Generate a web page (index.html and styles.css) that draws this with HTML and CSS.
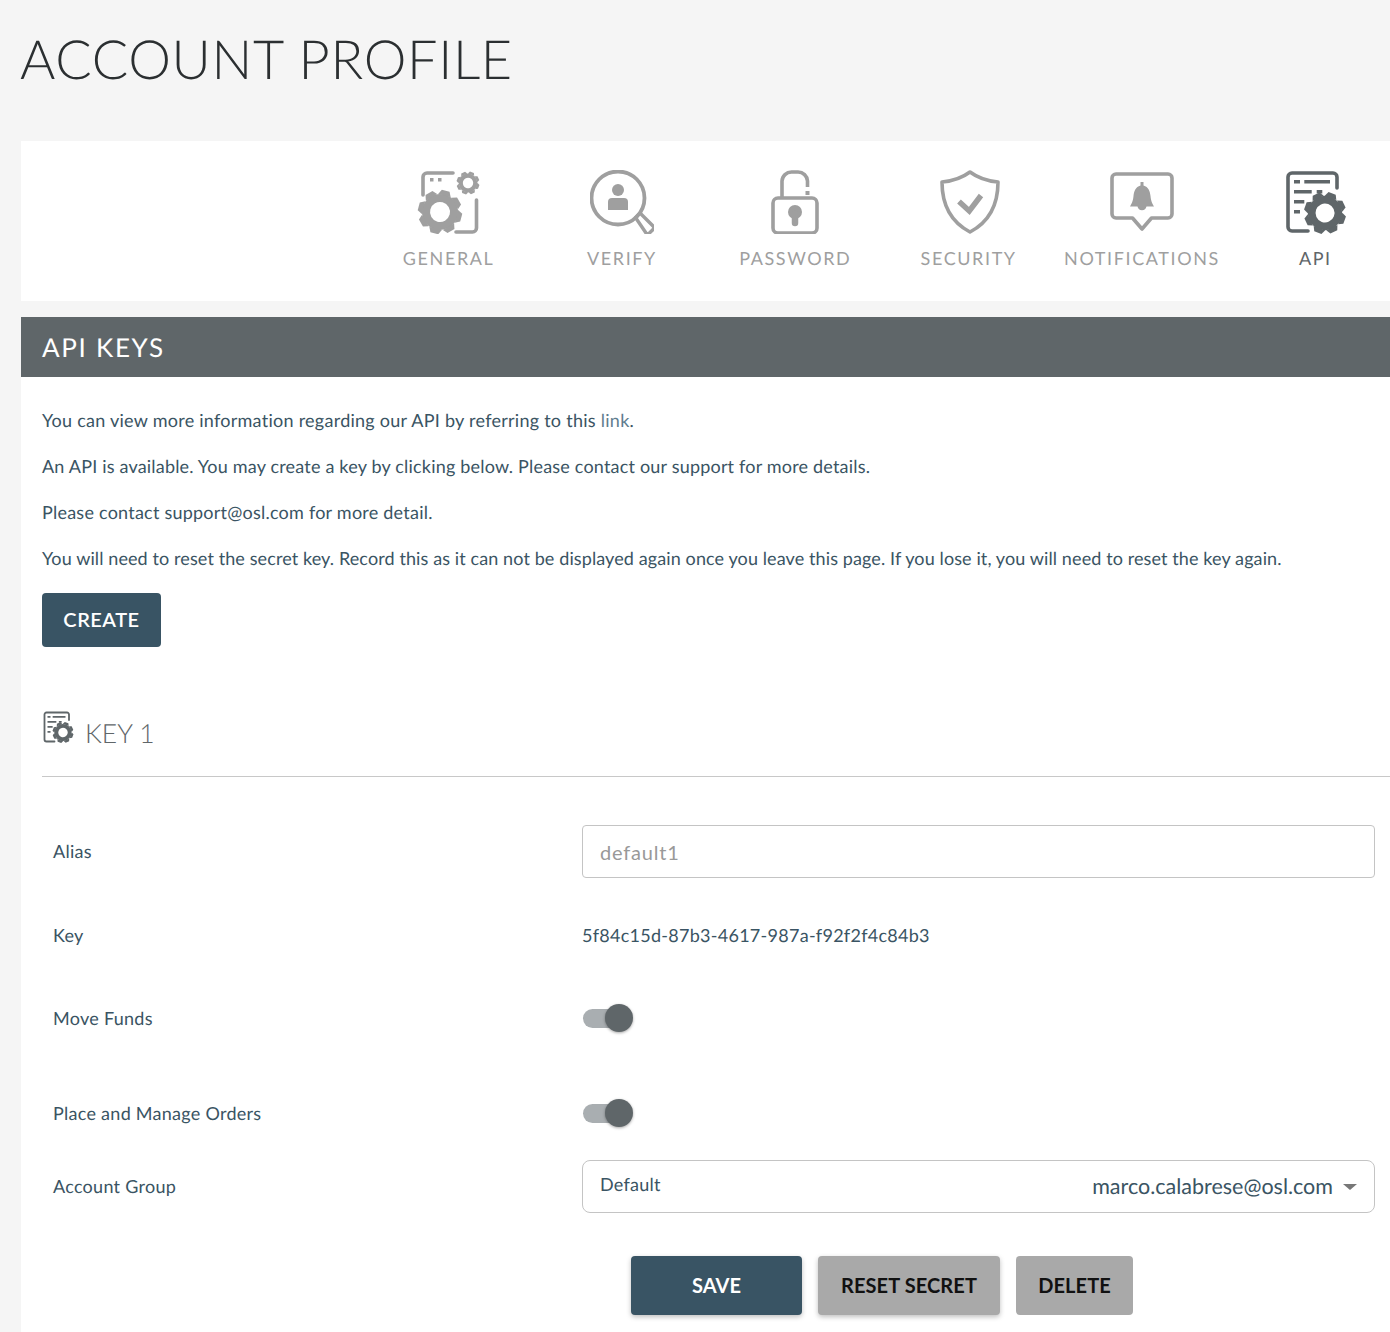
FILE: index.html
```html
<!DOCTYPE html>
<html lang="en">
<head>
<meta charset="utf-8">
<title>Account Profile</title>
<link rel="stylesheet" href="styles.css">
</head>
<body>
<svg class="defs" width="0" height="0" aria-hidden="true">
  <defs>
    <g id="gear">
      <circle r="14" fill="none" stroke="currentColor" stroke-width="8"/>
      <path id="tooth" d="M-6.500 -17 L-4 -22 H4 L6.500 -17Z" fill="currentColor" stroke="none"/>
      <use href="#tooth" transform="rotate(45)"/>
      <use href="#tooth" transform="rotate(90)"/>
      <use href="#tooth" transform="rotate(135)"/>
      <use href="#tooth" transform="rotate(180)"/>
      <use href="#tooth" transform="rotate(225)"/>
      <use href="#tooth" transform="rotate(270)"/>
      <use href="#tooth" transform="rotate(315)"/>
    </g>
    <g id="api">
      <path d="M54 18V7a4 4 0 0 0-4-4H9a4 4 0 0 0-4 4V57a4 4 0 0 0 4 4H25" fill="none" stroke="currentColor" stroke-width="3.6" stroke-linecap="round"/>
      <path d="M11 11.700H17M21.300 11.700H47M11 21.700H28.700M33.700 21.700H39.300M11 31.700H21.300M11 41.700H17" fill="none" stroke="currentColor" stroke-width="3.6"/>
      <use href="#gear" transform="translate(42 43) rotate(20) scale(.95)"/>
    </g>
  </defs>
</svg>

<h1 class="title">ACCOUNT PROFILE</h1>

<nav class="tabs">
  <a class="tab">
    <svg class="tab-icon" viewBox="-1 0 64 64">
      <path d="M5 25V7a4 4 0 0 1 4-4H35M58.500 30V58a4 4 0 0 1-4 4H38" fill="none" stroke="currentColor" stroke-width="3.600" stroke-linecap="round"/>
      <path d="M12 8h3.500v3.500h-3.500zM20 8h3.500v3.500h-3.500z" fill="currentColor"/>
      <use href="#gear" transform="translate(50 13) rotate(20) scale(.52)"/>
      <use href="#gear" transform="translate(22 42) rotate(15)"/>
    </svg>
    <span>GENERAL</span>
  </a>
  <a class="tab">
    <svg class="tab-icon" viewBox="0 0 64 64">
      <circle cx="28" cy="28" r="26.500" fill="none" stroke="currentColor" stroke-width="3.800"/>
      <path d="M45.500 47.500L50 43 63 56a2.500 2.500 0 0 1 0 3.500L59.500 63a2.500 2.500 0 0 1-3.500 0Z" fill="none" stroke="currentColor" stroke-width="3.400" stroke-linejoin="round"/>
      <circle cx="28" cy="20" r="6" fill="currentColor"/>
      <path d="M18 40V32a4 4 0 0 1 4-4H34a4 4 0 0 1 4 4V40Z" fill="currentColor"/>
    </svg>
    <span>VERIFY</span>
  </a>
  <a class="tab">
    <svg class="tab-icon" viewBox="0 0 64 64">
      <rect x="10" y="28" width="44" height="35" rx="5" fill="none" stroke="currentColor" stroke-width="3.600"/>
      <path d="M19 27V11A9.500 9.500 0 0 1 28.500 2H35A9.500 9.500 0 0 1 44.500 11V17" fill="none" stroke="currentColor" stroke-width="3.600"/>
      <path d="M42.500 21h4v4h-4z" fill="currentColor"/>
      <circle cx="32" cy="42" r="7" fill="currentColor"/>
      <path d="M32 44V53" stroke="currentColor" stroke-width="6.500" stroke-linecap="round"/>
    </svg>
    <span>PASSWORD</span>
  </a>
  <a class="tab">
    <svg class="tab-icon" viewBox="-1 0 64 64">
      <path d="M32 2C40 8 49 11 60 12C60 36 51 52 32 62C13 52 4 36 4 12C15 11 24 8 32 2Z" fill="none" stroke="currentColor" stroke-width="3.600" stroke-linejoin="round"/>
      <path d="M21 31.500L31.300 41 43 25.500" fill="none" stroke="currentColor" stroke-width="5.500"/>
    </svg>
    <span>SECURITY</span>
  </a>
  <a class="tab">
    <svg class="tab-icon" viewBox="0 0 64 64">
      <path d="M6 4H58a4 4 0 0 1 4 4V44a4 4 0 0 1-4 4H41.500L32 59 22.500 48H6a4 4 0 0 1-4-4V8a4 4 0 0 1 4-4Z" fill="none" stroke="currentColor" stroke-width="3.600" stroke-linejoin="round"/>
      <path d="M30.500 12H33.500V15.500C38.500 17 40 21 40.500 26C41 31 42 33 44 36.500H36.500A4.600 4.600 0 0 1 27.500 36.500H20C22 33 23 31 23.500 26C24 21 25.500 17 30.500 15.500Z" fill="currentColor"/>
    </svg>
    <span>NOTIFICATIONS</span>
  </a>
  <a class="tab tab-active">
    <svg class="tab-icon" viewBox="0 0 64 64"><use href="#api"/></svg>
    <span>API</span>
  </a>
</nav>

<main class="panel">
  <h2 class="panel-head">API KEYS</h2>
  <div class="panel-body">
    <p class="note note-a">You can view more information regarding our API by referring to this <a class="link">link</a>.</p>
    <p class="note note-b">An API is available. You may create a key by clicking below. Please contact our support for more details.</p>
    <p class="note note-c">Please contact support@osl.com for more detail.</p>
    <p class="note note-d">You will need to reset the secret key. Record this as it can not be displayed again once you leave this page. If you lose it, you will need to reset the key again.</p>
    <button class="btn btn-primary btn-create">CREATE</button>

    <div class="key-head">
      <svg class="key-icon" viewBox="2 0 64 64"><use href="#api"/></svg>
      <h3 class="key-title">KEY 1</h3>
    </div>

    <form class="form">
      <div class="row row-alias">
        <label class="label">Alias</label>
        <div class="field"><input class="input" type="text" placeholder="default1"></div>
      </div>
      <div class="row row-key">
        <span class="label">Key</span>
        <span class="field">5f84c15d-87b3-4617-987a-f92f2f4c84b3</span>
      </div>
      <div class="row row-funds">
        <span class="label">Move Funds</span>
        <div class="field"><span class="toggle"><span class="thumb"></span></span></div>
      </div>
      <div class="row row-orders">
        <span class="label">Place and Manage Orders</span>
        <div class="field"><span class="toggle"><span class="thumb"></span></span></div>
      </div>
      <div class="row row-group">
        <span class="label">Account Group</span>
        <div class="field">
          <div class="select">
            <span class="select-name">Default</span>
            <span class="select-value">marco.calabrese@osl.com</span>
            <span class="caret"></span>
          </div>
        </div>
      </div>
      <div class="actions">
        <button type="button" class="btn btn-primary btn-save">SAVE</button>
        <button type="button" class="btn btn-muted btn-reset">RESET SECRET</button>
        <button type="button" class="btn btn-muted btn-delete">DELETE</button>
      </div>
    </form>
  </div>
</main>
</body>
</html>
```
FILE: styles.css
```css
* { box-sizing: border-box; }
html, body { margin: 0; height: 1332px; overflow: hidden; }
body {
  background: #f5f5f5;
  padding-left: 21px;
  font-family: "Lato", "Liberation Sans", sans-serif;
  color: #3a5463;
  font-size: 18px;
  text-rendering: geometricPrecision;
  font-variant-ligatures: none;
}
.defs { position: absolute; }
.title {
  margin: 0 0 0 -1px;
  height: 141px;
  padding-top: 26px;
  font-size: 54px;
  line-height: 66px;
  font-weight: 300;
  letter-spacing: .65px;
  color: #2b2f31;
}
.tabs {
  display: grid;
  grid-template-columns: repeat(6, 173.33px);
  height: 160px;
  padding: 29px 0 0 341px;
  background: #fff;
  overflow: hidden;
}
.tab {
  display: flex;
  flex-direction: column;
  align-items: center;
  gap: 11px;
  color: #9f9f9f;
  font-size: 18px;
  line-height: 26px;
  letter-spacing: 1.6px;
  white-space: nowrap;
}
.tab-active { color: #5f6669; }
.tab-icon { width: 64px; height: 64px; display: block; }
.panel { margin-top: 16px; background: #fff; height: 1015px; }
.panel-head {
  margin: 0;
  height: 60px;
  padding-left: 21px;
  background: #5f6669;
  color: #fff;
  font-size: 26px;
  font-weight: 400;
  line-height: 60px;
  letter-spacing: 1.700px;
}
.panel-body { padding: 29px 15px 0 21px; }
.note { margin: 0 0 18px; line-height: 28px; }
.note-a { letter-spacing: .26px; }
.note-b { letter-spacing: .19px; }
.note-c { letter-spacing: .23px; }
.note-d { letter-spacing: .105px; }
.link { color: #5f7d8e; }
.btn {
  border: 0;
  border-radius: 4px;
  padding: 0 0 2px;
  font-family: inherit;
  font-size: 20px;
  font-weight: 700;
  letter-spacing: .1px;
}
.btn-primary { background: #395464; color: #fff; }
.btn-muted { background: #a9a9a9; color: #111; }
.btn-create { display: block; width: 119px; height: 54px; margin-top: 21px; font-weight: 600; letter-spacing: .5px; }
.key-head {
  display: flex;
  align-items: flex-start;
  gap: 10px;
  height: 130px;
  margin-right: -15px;
  padding: 64px 0 0 1px;
  border-bottom: 1px solid #c8c8c8;
}
.key-icon { width: 32px; height: 32px; color: #5f6669; flex: none; }
.key-title {
  margin: 0;
  padding-top: 5px;
  font-size: 26.500px;
  font-weight: 300;
  line-height: 34px;
  color: #5f6669;
}
.form { padding-top: 48px; }
.row { display: grid; grid-template-columns: 540px 793px; align-items: center; letter-spacing: .27px; }
.label { padding-left: 11px; }
.row-alias { height: 53px; }
.row-alias .label { margin-top: -2px; }
.row-key { height: 32px; margin-top: 41px; }
.row-funds { height: 32px; margin-top: 51px; }
.row-orders { height: 32px; margin-top: 63px; }
.row-group { height: 53px; margin-top: 31px; }
.row-group .label { margin-top: -2px; }
.input {
  display: block;
  width: 100%;
  height: 53px;
  padding: 0 17px;
  border: 1px solid #c4c4c4;
  border-radius: 4px;
  font-family: inherit;
  font-size: 20px;
  letter-spacing: .8px;
  color: #999;
}
.input::placeholder { color: #999; opacity: 1; }
.toggle {
  display: block;
  position: relative;
  width: 42px;
  height: 19px;
  margin-left: 1px;
  border-radius: 10px;
  background: #a9aeb1;
}
.thumb {
  position: absolute;
  top: -5px;
  left: 22px;
  width: 28px;
  height: 28px;
  border-radius: 50%;
  background: #5f6669;
  box-shadow: 0 1px 3px rgba(0,0,0,.35);
}
.select {
  display: flex;
  align-items: center;
  height: 53px;
  padding: 0 17px 2px;
  border: 1px solid #c4c4c4;
  border-radius: 8px;
}
.select-name { margin-top: -4px; flex: 1; }
.select-value { font-size: 21.500px; letter-spacing: 0; }
.caret {
  width: 0;
  height: 0;
  margin: 2px 0 0 10px;
  border-left: 7px solid transparent;
  border-right: 7px solid transparent;
  border-top: 6px solid #777;
}
.actions { display: flex; gap: 16px; margin: 43px 0 0 589px; }
.actions .btn { height: 59px; box-shadow: 0 2px 5px rgba(0,0,0,.25); }
.btn-save { width: 171px; }
.btn-reset { width: 182px; }
.btn-delete { width: 117px; box-shadow: none !important; }
```
